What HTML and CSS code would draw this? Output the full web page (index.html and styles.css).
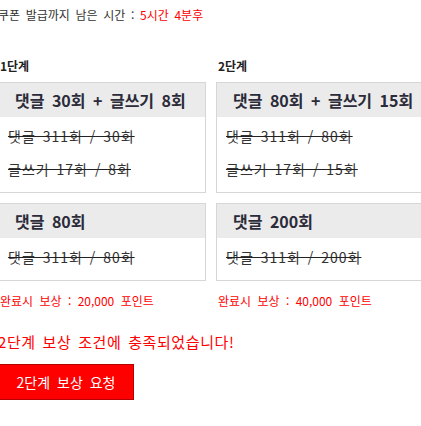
FILE: index.html
```html
<!DOCTYPE html>
<html lang="ko">
<head>
<meta charset="utf-8">
<title>쿠폰 발급</title>
<link rel="stylesheet" href="styles.css">
</head>
<body>
<div class="page">
  <p class="timer">쿠폰 발급까지 남은 시간 : <span class="red">5시간 4분후</span></p>
  <div class="stages">
    <div class="stage">
      <h3 class="stage-title">1단계</h3>
      <div class="box">
        <div class="box-head">댓글 30회 + 글쓰기 8회</div>
        <div class="box-body">
          <div class="row done">댓글 311회 / 30회</div>
          <div class="row done">글쓰기 17회 / 8회</div>
        </div>
      </div>
      <div class="box">
        <div class="box-head">댓글 80회</div>
        <div class="box-body">
          <div class="row done">댓글 311회 / 80회</div>
        </div>
      </div>
      <p class="reward">완료시 보상 : 20,000 포인트</p>
    </div>
    <div class="stage">
      <h3 class="stage-title">2단계</h3>
      <div class="box">
        <div class="box-head">댓글 80회 + 글쓰기 15회</div>
        <div class="box-body">
          <div class="row done">댓글 311회 / 80회</div>
          <div class="row done">글쓰기 17회 / 15회</div>
        </div>
      </div>
      <div class="box">
        <div class="box-head">댓글 200회</div>
        <div class="box-body">
          <div class="row done">댓글 311회 / 200회</div>
        </div>
      </div>
      <p class="reward">완료시 보상 : 40,000 포인트</p>
    </div>
  </div>
  <p class="message">2단계 보상 조건에 충족되었습니다!</p>
  <button class="request" type="button">2단계 보상 요청</button>
</div>
</body>
</html>
```

FILE: styles.css
```css
html, body {
  margin: 0;
  padding: 0;
  background: #ffffff;
}

body {
  font-family: "Noto Sans CJK KR", "Noto Sans", sans-serif;
  color: #333333;
  font-size: 12px;
}

.page {
  margin-left: -2px;
  padding-top: 6px;
}

.timer {
  margin: 0;
  font-size: 12px;
  line-height: 18px;
  word-spacing: 2.3px;
  white-space: nowrap;
}

.red {
  color: #ff0000;
}

.stages {
  display: grid;
  grid-template-columns: 208px 208px;
  column-gap: 10px;
  margin-top: 34px;
}

.stage {
  display: flex;
  flex-direction: column;
  gap: 10px;
}

.stage-title {
  margin: 0 0 -2px 2px;
  font-size: 12px;
  line-height: 16px;
  font-weight: bold;
  color: #222222;
}

.box {
  border: 1px solid #d6d6d6;
  background: #ffffff;
}

.box-head {
  height: 34px;
  line-height: 34px;
  background: #ebebeb;
  padding-left: 16px;
  font-size: 16px;
  font-weight: bold;
  color: #2b2b3a;
  white-space: nowrap;
  word-spacing: 3px;
}

.box-body {
  padding: 3px 0 6px 9px;
}

.row {
  height: 33px;
  line-height: 33px;
  font-size: 14px;
  color: #333333;
  white-space: nowrap;
  word-spacing: 2px;
  letter-spacing: 1px;
}

.done {
  text-decoration: line-through;
  text-decoration-color: #222222;
}

.reward {
  margin: 2px 0 0 2px;
  font-size: 12px;
  line-height: 16px;
  color: #ff0000;
  white-space: nowrap;
  word-spacing: 3px;
}

.message {
  margin: 23px 0 0 0;
  font-size: 15px;
  line-height: 20px;
  color: #ff0000;
  letter-spacing: 0.6px;
  word-spacing: 2px;
  white-space: nowrap;
}

.request {
  display: block;
  margin-top: 12px;
  width: 136px;
  height: 36px;
  padding: 0;
  border: 1px solid #b30000;
  background: #ff0000;
  color: #ffffff;
  font-family: "Noto Sans CJK KR", "Noto Sans", sans-serif;
  font-size: 14px;
  word-spacing: 3px;
  cursor: pointer;
}
```
